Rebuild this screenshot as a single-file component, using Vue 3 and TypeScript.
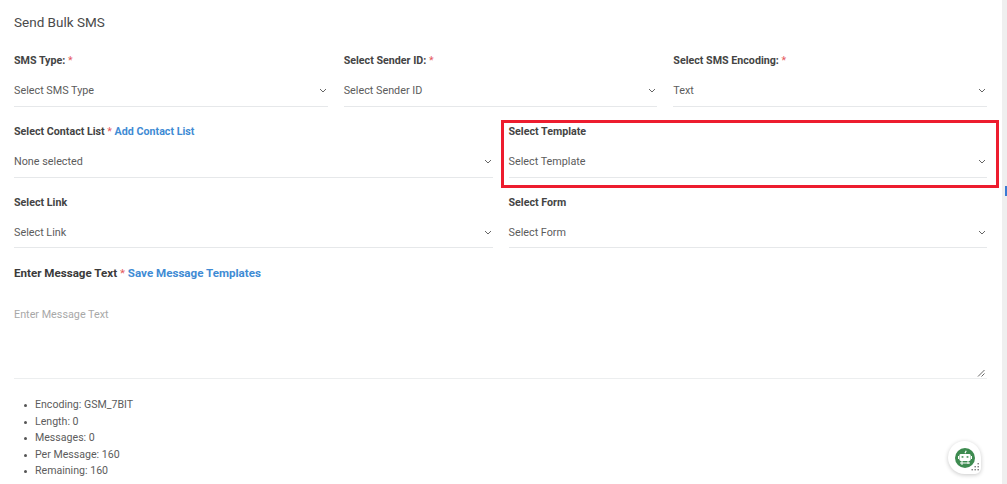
<script setup lang="ts">
interface Field {
  label: string
  value: string
  required?: boolean
  link?: string
  highlight?: boolean
}
const topRow: Field[] = [
  { label: 'SMS Type:', value: 'Select SMS Type', required: true },
  { label: 'Select Sender ID:', value: 'Select Sender ID', required: true },
  { label: 'Select SMS Encoding:', value: 'Text', required: true },
]
const otherRows: Field[] = [
  { label: 'Select Contact List', value: 'None selected', required: true, link: 'Add Contact List' },
  { label: 'Select Template', value: 'Select Template', highlight: true },
  { label: 'Select Link', value: 'Select Link' },
  { label: 'Select Form', value: 'Select Form' },
]
const stats: string[] = [
  'Encoding: GSM_7BIT',
  'Length: 0',
  'Messages: 0',
  'Per Message: 160',
  'Remaining: 160',
]
</script>

<template>
  <div class="page">
    <main class="content">
      <h1 class="title">Send Bulk SMS</h1>
      <div class="grid three">
        <div v-for="f in topRow" :key="f.label" class="field">
          <div class="label">{{ f.label }} <span v-if="f.required" class="req">*</span></div>
          <div class="select">
            <span>{{ f.value }}</span>
            <svg class="chev" viewBox="0 0 8 5" width="8" height="5"><path d="M1 1l3 3 3-3" fill="none" stroke="#666" stroke-width="1" /></svg>
          </div>
        </div>
      </div>
      <div class="grid two">
        <div v-for="f in otherRows" :key="f.label" class="field">
          <div v-if="f.highlight" class="highlight"></div>
          <div class="label">
            <span>{{ f.label }}</span>
            <span v-if="f.required" class="req">{{ ' *' }}</span>
            <a v-if="f.link" class="link">{{ ' ' + f.link }}</a>
          </div>
          <div class="select">
            <span>{{ f.value }}</span>
            <svg class="chev" viewBox="0 0 8 5" width="8" height="5"><path d="M1 1l3 3 3-3" fill="none" stroke="#666" stroke-width="1" /></svg>
          </div>
        </div>
      </div>
      <div class="message">
        <div class="msg-label">Enter Message Text <span class="req">*</span> <a class="link">Save Message Templates</a></div>
        <div class="textarea">
          <span class="placeholder">Enter Message Text</span>
          <svg class="grip" viewBox="0 0 8 8" width="8" height="8"><path d="M1 7.5L7.5 1M4.5 7.5L7.5 4.5" stroke="#666" stroke-width="1" fill="none" /></svg>
        </div>
      </div>
      <ul class="stats">
        <li v-for="s in stats" :key="s">{{ s }}</li>
      </ul>
    </main>
    <aside class="gutter"><span class="tick"></span></aside>
    <div class="bot">
      <svg viewBox="0 0 20 20" width="20" height="20">
        <circle cx="10" cy="10" r="10" fill="#3d8b50" />
        <path d="M10 5.2l1.2-2.4" stroke="#fff" stroke-width="1.2" />
        <rect x="4.4" y="6" width="11.2" height="7" rx="1.4" fill="#fff" />
        <rect x="6.6" y="8.2" width="1.8" height="1.5" fill="#3d8b50" />
        <rect x="11.6" y="8.2" width="1.8" height="1.5" fill="#3d8b50" />
        <rect x="3" y="8" width="1" height="3" fill="#fff" />
        <rect x="16" y="8" width="1" height="3" fill="#fff" />
        <path d="M5 15h10M7 13v4M13 13v3" stroke="#fff" stroke-width="1" fill="none" />
      </svg>
      <svg class="dots" viewBox="0 0 9 9" width="9" height="9" fill="#777">
        <rect x="6.5" y="0" width="1.4" height="1.4" />
        <rect x="3.5" y="3" width="1.4" height="1.4" />
        <rect x="6.5" y="3" width="1.4" height="1.4" />
        <rect x="0.5" y="6" width="1.4" height="1.4" />
        <rect x="3.5" y="6" width="1.4" height="1.4" />
        <rect x="6.5" y="6" width="1.4" height="1.4" />
      </svg>
    </div>
  </div>
</template>

<style scoped>
.page {
  position: relative;
  display: flex;
  width: 1007px;
  height: 484px;
  overflow: hidden;
  background: #fff;
  font-family: Roboto, "Liberation Sans", sans-serif;
  color: #555;
}
.content {
  box-sizing: border-box;
  width: 1002px;
  padding: 14px 15px 0 14px;
}
.title {
  margin: 0 0 23px;
  height: 17px;
  font-size: 13.5px;
  line-height: 17px;
  font-weight: 400;
  color: #4a4a4a;
}
.grid {
  display: grid;
  column-gap: 16px;
}
.three {
  grid-template-columns: repeat(3, 1fr);
}
.two {
  grid-template-columns: repeat(2, 1fr);
}
.field {
  position: relative;
  height: 71px;
}
.two .field:nth-child(n + 3) {
  height: 70px;
}
.two .field:nth-child(n + 3) .select {
  height: 39px;
  padding-top: 9px;
}
.label {
  height: 13px;
  font-size: 10.7px;
  line-height: 13px;
  font-weight: 700;
  color: #444;
  white-space: pre-wrap;
}
.req {
  color: #e5585d;
  font-weight: 400;
}
.link {
  color: #3f8bd4;
  font-weight: 700;
}
.select {
  box-sizing: border-box;
  display: flex;
  align-items: center;
  justify-content: space-between;
  height: 40px;
  padding: 7px 1px 0 0;
  border-bottom: 1px solid #e6e8ea;
  font-size: 10.8px;
  color: #5c5c5c;
}
.highlight {
  position: absolute;
  top: -5px;
  left: -8px;
  right: -12px;
  height: 68px;
  box-sizing: border-box;
  border: 3px solid #ed1c2e;
  pointer-events: none;
}
.msg-label {
  height: 14px;
  font-size: 11.6px;
  line-height: 14px;
  font-weight: 700;
  color: #3a3a3a;
}
.textarea {
  position: relative;
  box-sizing: border-box;
  height: 99px;
  padding-top: 28px;
  border-bottom: 1px solid #eceeef;
  font-size: 10.8px;
  line-height: 13px;
}
.placeholder {
  color: #a8a8a8;
}
.grip {
  position: absolute;
  right: 2px;
  bottom: 1px;
}
.stats {
  margin: 18px 0 0;
  padding: 0 0 0 21px;
  list-style: none;
  font-size: 10.6px;
  line-height: 16.5px;
  color: #5c5c5c;
}
.stats li {
  position: relative;
}
.stats li::before {
  content: "";
  position: absolute;
  left: -11px;
  top: 7px;
  width: 3px;
  height: 3px;
  border-radius: 50%;
  background: #555;
}
.gutter {
  position: relative;
  flex: 1;
  background: #efefef;
}
.tick {
  position: absolute;
  left: 3px;
  top: 186px;
  width: 2px;
  height: 10px;
  background: #3a7bd5;
}
.bot {
  position: absolute;
  left: 948px;
  top: 441px;
  display: flex;
  align-items: center;
  justify-content: center;
  width: 33px;
  height: 33px;
  border-radius: 50% 50% 6px 50%;
  background: #fff;
  box-shadow: 0 1px 4px rgba(0, 0, 0, 0.22);
}
.dots {
  position: absolute;
  right: 1px;
  bottom: 2px;
}
</style>
